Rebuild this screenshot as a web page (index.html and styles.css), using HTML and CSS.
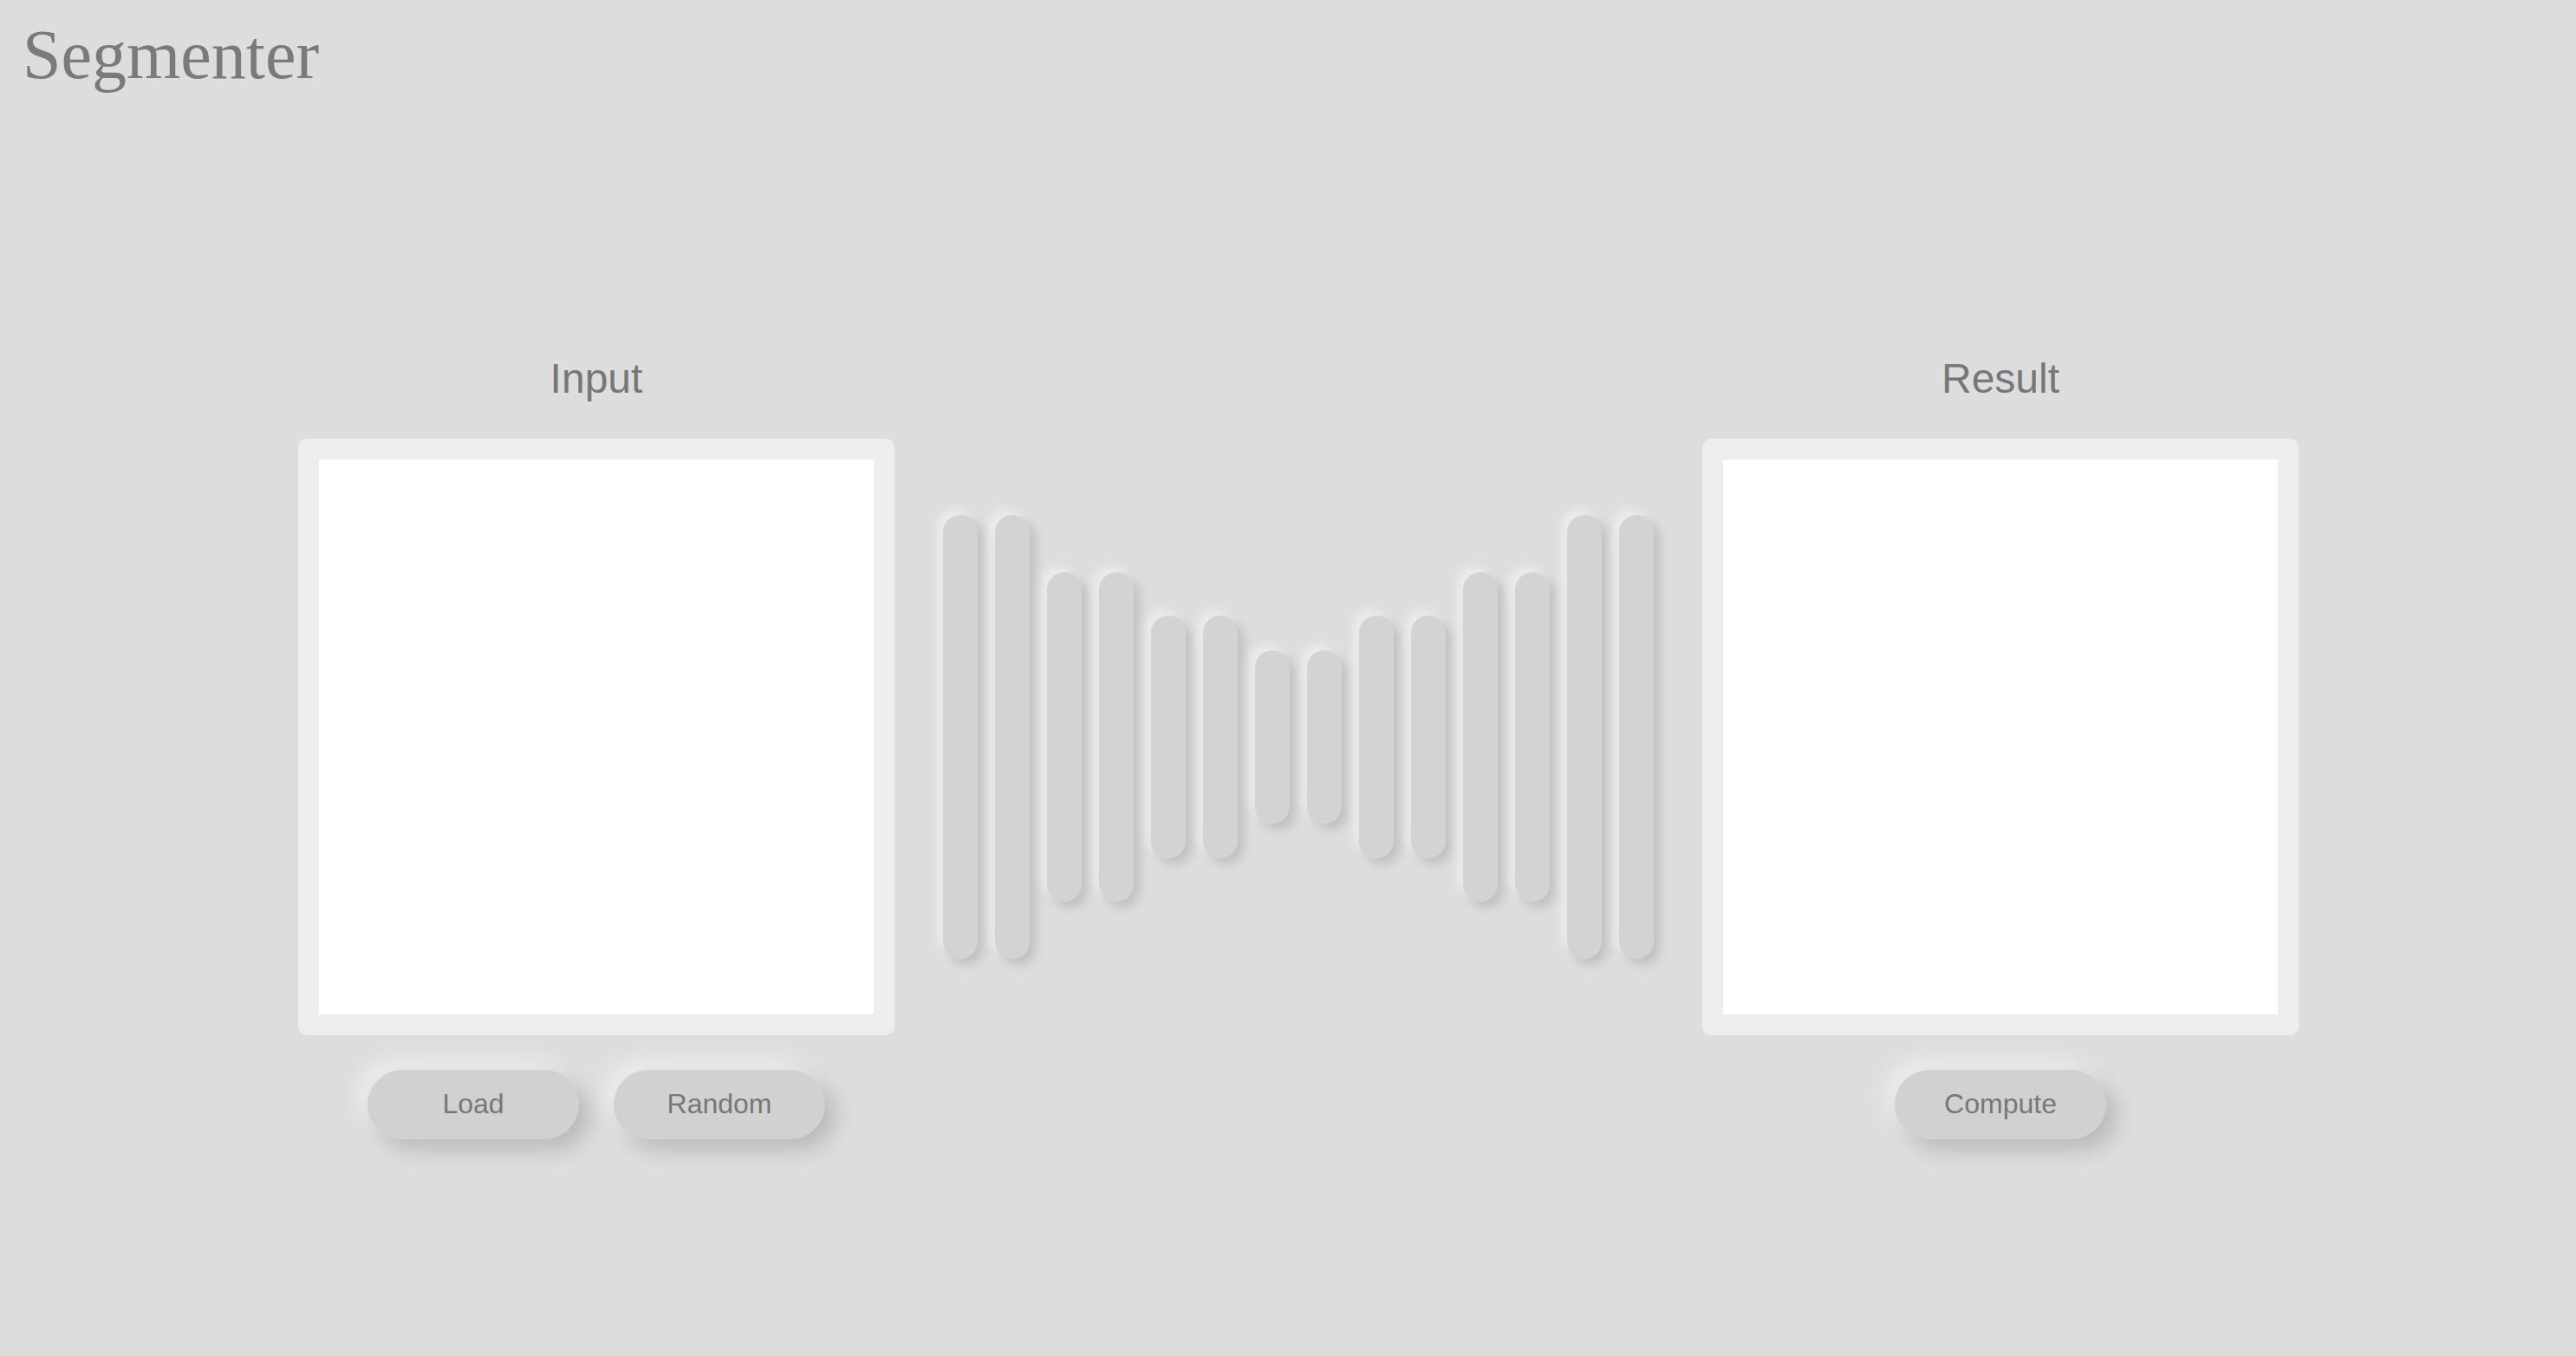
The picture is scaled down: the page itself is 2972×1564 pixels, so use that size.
FILE: index.html
```html
<!DOCTYPE html>
<html>
<head>
<meta charset="utf-8">
<title>Segmenter</title>
<link rel="stylesheet" href="styles.css">
</head>
<body>
<header class="header"><h1 class="title">Segmenter</h1></header>
<main class="stage">
  <div class="label">Input</div>
  <div class="gap-cell"></div>
  <div class="label">Result</div>

  <div class="panel"><div class="canvas"></div></div>
  <div class="network">
    <div class="bar bar-1"></div><div class="bar bar-1"></div>
    <div class="bar bar-2"></div><div class="bar bar-2"></div>
    <div class="bar bar-3"></div><div class="bar bar-3"></div>
    <div class="bar bar-4"></div><div class="bar bar-4"></div>
    <div class="bar bar-3"></div><div class="bar bar-3"></div>
    <div class="bar bar-2"></div><div class="bar bar-2"></div>
    <div class="bar bar-1"></div><div class="bar bar-1"></div>
  </div>
  <div class="panel"><div class="canvas"></div></div>

  <div class="actions"><button class="btn">Load</button><button class="btn">Random</button></div>
  <div class="gap-cell"></div>
  <div class="actions"><button class="btn">Compute</button></div>
</main>
</body>
</html>
```
FILE: styles.css
```css
html, body {
  margin: 0;
  padding: 0;
  background: #dddddd;
}
body {
  width: 2972px;
  height: 1564px;
  overflow: hidden;
  font-family: "Liberation Sans", Arial, sans-serif;
  color: #787878;
}
.header {
  padding: 23px 0 0 26px;
}
.title {
  margin: 0;
  font-family: "Liberation Serif", "Times New Roman", serif;
  font-weight: normal;
  font-size: 80px;
  line-height: 80px;
  color: #7a7a7a;
}
.stage {
  margin-top: 310px;
  padding-left: 344px;
  display: grid;
  grid-template-columns: 688px 932px 688px;
  grid-template-rows: 93px 688px 120px;
}
.label {
  align-self: start;
  font-size: 48px;
  line-height: 48px;
  text-align: center;
  color: #777777;
}
.panel {
  background: #eeeeee;
  border-radius: 10px;
  padding: 24px;
  box-sizing: border-box;
  width: 688px;
  height: 688px;
}
.canvas {
  background: #ffffff;
  width: 640px;
  height: 640px;
}
.network {
  display: flex;
  align-items: center;
  justify-content: center;
  gap: 20px;
}
.bar {
  width: 40px;
  border-radius: 20px;
  background: #d3d3d3;
  box-shadow: 7px 7px 12px rgba(0, 0, 0, 0.13), -7px -7px 12px rgba(255, 255, 255, 0.45);
}
.bar-1 { height: 512px; }
.bar-2 { height: 380px; }
.bar-3 { height: 280px; }
.bar-4 { height: 200px; }
.actions {
  display: flex;
  justify-content: center;
  gap: 40px;
  padding-top: 40px;
}
.btn {
  width: 244px;
  height: 80px;
  border: none;
  border-radius: 40px;
  background: #d1d1d1;
  color: #777777;
  font-family: "Liberation Sans", Arial, sans-serif;
  font-size: 32px;
  line-height: 78px;
  padding: 0 0 2px;
  box-shadow: 12px 12px 24px rgba(0, 0, 0, 0.16), -12px -12px 24px rgba(255, 255, 255, 0.45);
}
```
